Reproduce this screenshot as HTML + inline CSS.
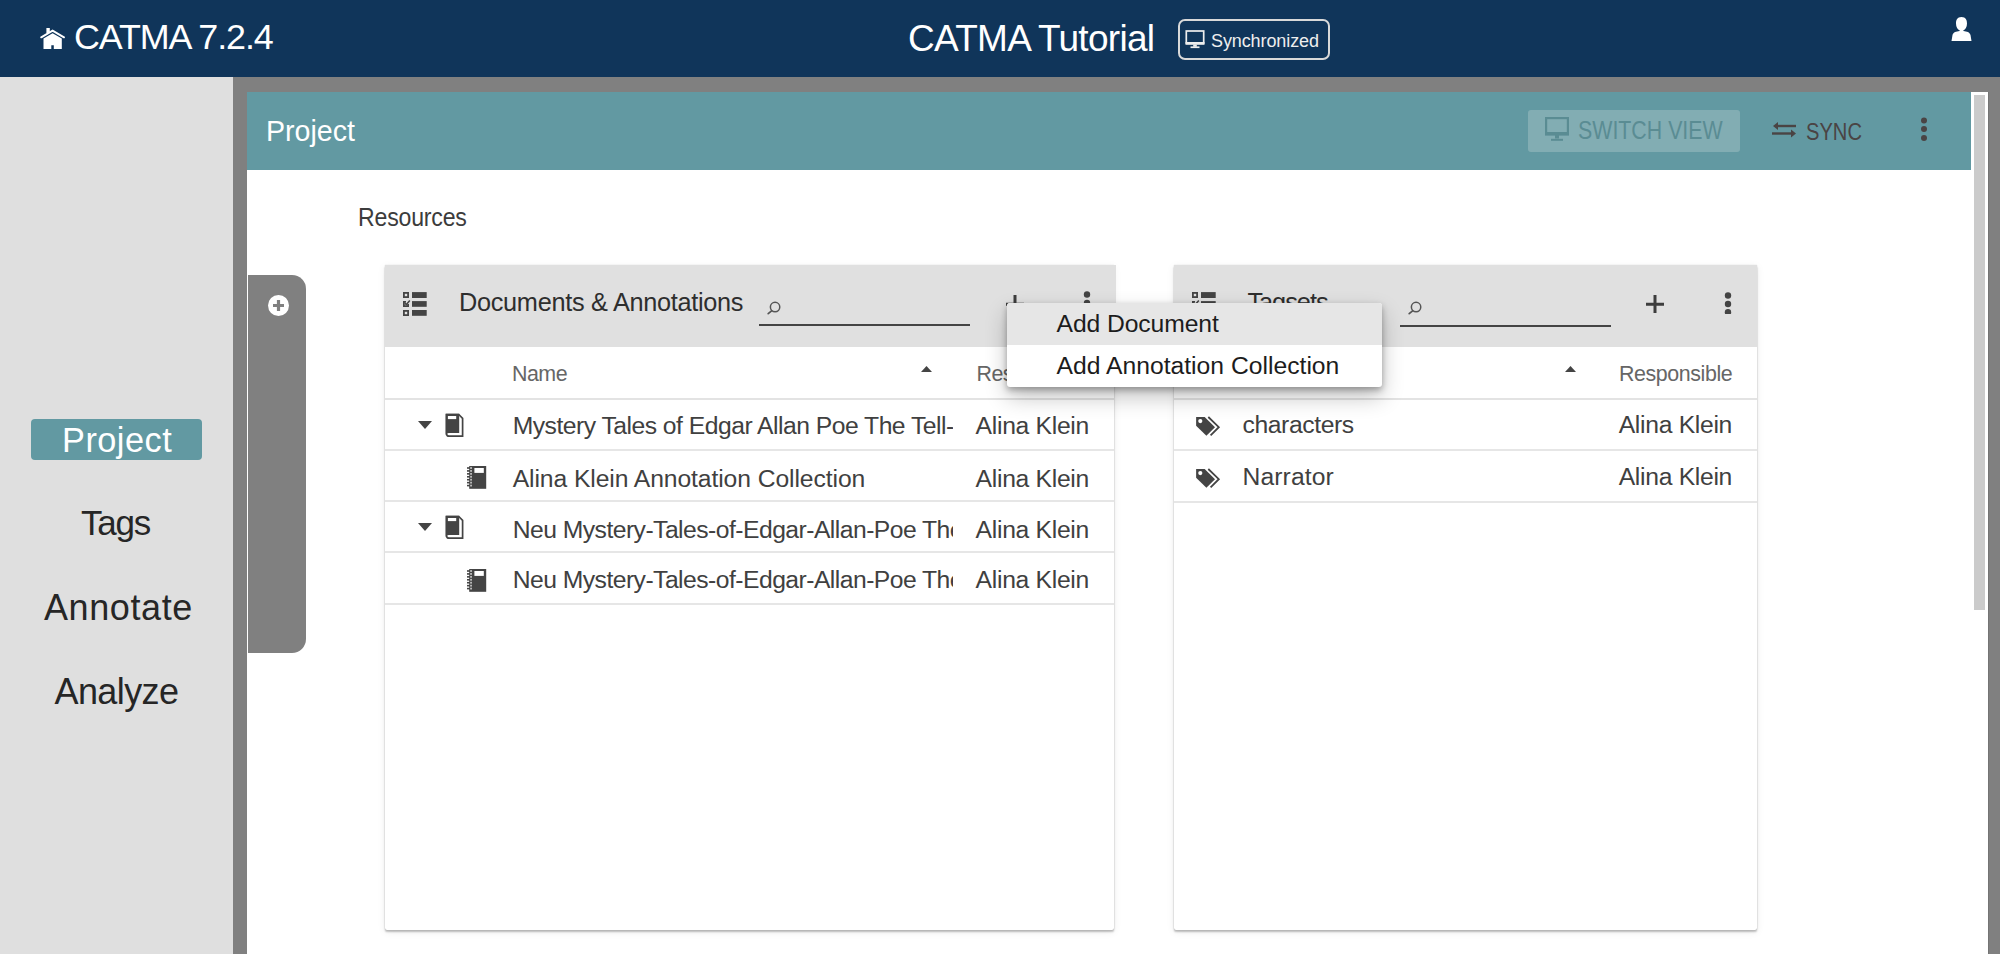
<!DOCTYPE html>
<html><head><meta charset="utf-8"><style>
html,body{margin:0;padding:0;width:2000px;height:954px;overflow:hidden;background:#808080;font-family:"Liberation Sans", sans-serif;}
.r{position:absolute;}
.t{position:absolute;white-space:nowrap;line-height:1;}
</style></head><body>
<div class="r" style="left:0px;top:0px;width:2000px;height:77px;background:#10355a;"></div>
<div class="t" style="left:74.0px;top:20px;font-size:35.90px;color:#fff;letter-spacing:-1.1px;">CATMA 7.2.4</div>
<div class="t" style="left:908.0px;top:20px;font-size:37.00px;color:#fff;letter-spacing:-0.72px;">CATMA Tutorial</div>
<div class="r" style="left:1177.5px;top:19px;width:152.0px;height:41px;background:transparent;border:2px solid #d9d9d9;border-radius:7px;box-sizing:border-box;"></div>
<div class="t" style="left:1211.0px;top:32px;font-size:18.00px;color:#eee;letter-spacing:-0.1px;">Synchronized</div>
<svg class="r" style="left:36px;top:22px" width="34" height="32" viewBox="0 0 34 32">
<path d="M5.2 15.3 L16.6 8.6 L28 15.3" fill="none" stroke="#fff" stroke-width="2" stroke-linecap="round" stroke-linejoin="miter"/>
<rect x="10.4" y="6" width="3.4" height="5" fill="#fff"/>
<path d="M7.5 16.6 L16.6 11.2 L25.8 16.6 V27 H17.8 V23.2 H15.3 V27 H7.5 Z" fill="#fff"/>
</svg>
<svg class="r" style="left:1185px;top:30px" width="20" height="19" viewBox="0 0 20 19">
<rect x="1.3" y="1" width="17.4" height="12" fill="none" stroke="#eee" stroke-width="1.7"/>
<rect x="0.5" y="12" width="19" height="2.8" fill="#eee"/>
<rect x="8.2" y="14.5" width="3.6" height="2.3" fill="#eee"/>
<rect x="5.5" y="16.4" width="9" height="1.7" fill="#eee"/>
</svg>
<svg class="r" style="left:1950px;top:16px" width="23" height="26" viewBox="0 0 23 26">
<path d="M11.5 1 C15.9 1 17 4 17 7.5 C17 11 15.3 13.5 13.4 14.3 L13.4 15 C17 15.5 19.5 16 20.5 19 L21.5 25 H1.5 L2.5 19 C3.5 16 6 15.5 9.6 15 L9.6 14.3 C7.7 13.5 6 11 6 7.5 C6 4 7.1 1 11.5 1 Z" fill="#fff"/>
</svg>
<div class="r" style="left:0px;top:77px;width:233px;height:877px;background:#dfdfdf;"></div>
<div class="r" style="left:233px;top:77px;width:1767px;height:877px;background:#808080;"></div>
<div class="r" style="left:31px;top:419px;width:171px;height:41px;background:#6299a2;border-radius:4px;"></div>
<div class="t" style="left:62.0px;top:423px;font-size:34.30px;color:#fff;letter-spacing:0.5px;">Project</div>
<div class="t" style="left:81.0px;top:505px;font-size:35.00px;color:#262626;letter-spacing:-1.2px;">Tags</div>
<div class="t" style="left:44.0px;top:590px;font-size:36.00px;color:#262626;letter-spacing:0.6px;">Annotate</div>
<div class="t" style="left:54.5px;top:674px;font-size:36.00px;color:#262626;letter-spacing:-0.6px;">Analyze</div>
<div class="r" style="left:247px;top:92px;width:1724px;height:862px;background:#fff;"></div>
<div class="r" style="left:247px;top:92px;width:1724px;height:78px;background:#6299a2;"></div>
<div class="t" style="left:266.0px;top:117px;font-size:28.60px;color:#fff;letter-spacing:0px;">Project</div>
<div class="r" style="left:1528px;top:110px;width:212px;height:42px;background:#82adb3;border-radius:3px;"></div>
<svg class="r" style="left:1545px;top:117px" width="24" height="24" viewBox="0 0 24 24">
<rect x="1.1" y="1.1" width="21.8" height="15" fill="none" stroke="#5a8c93" stroke-width="2.2"/>
<rect x="0" y="15" width="24" height="3.6" fill="#5a8c93"/>
<rect x="10" y="18" width="4" height="3.5" fill="#5a8c93"/>
<rect x="6" y="21.8" width="12" height="2" fill="#5a8c93"/>
</svg>
<div class="t" style="left:1578.0px;top:118px;font-size:25.00px;color:#5a8c93;letter-spacing:0px;transform:scaleX(0.854);transform-origin:0 0;">SWITCH VIEW</div>
<svg class="r" style="left:1772px;top:121px" width="25" height="18" viewBox="0 0 25 18">
<path d="M24 5 H4" stroke="#4a4444" stroke-width="2.4"/>
<path d="M1 5 L6 1 V9 Z" fill="#4a4444"/>
<path d="M0 12.5 H20" stroke="#4a4444" stroke-width="2.4"/>
<path d="M24 12.5 L19 8.5 V16.5 Z" fill="#4a4444"/>
</svg>
<div class="t" style="left:1806.0px;top:120px;font-size:24.70px;color:#4a4444;letter-spacing:0px;transform:scaleX(0.816);transform-origin:0 0;">SYNC</div>
<svg class="r" style="left:1920px;top:116px" width="9" height="26" viewBox="0 0 9 26">
<circle cx="4" cy="4.5" r="3" fill="#4a4444"/><circle cx="4" cy="13" r="3" fill="#4a4444"/><circle cx="4" cy="22" r="3" fill="#4a4444"/>
</svg>
<div class="r" style="left:1971px;top:92px;width:17px;height:862px;background:#fff;"></div>
<div class="r" style="left:1974px;top:95px;width:11px;height:515px;background:#cbcbcb;"></div>
<div class="r" style="left:1988px;top:77px;width:12px;height:877px;background:#808080;"></div>
<div class="r" style="left:1988px;top:92px;width:1px;height:862px;background:#747474;"></div>
<div class="t" style="left:358.0px;top:205px;font-size:25.10px;color:#3c3c3c;letter-spacing:-0.2px;transform:scaleX(0.92);transform-origin:0 0;">Resources</div>
<div class="r" style="left:248px;top:275px;width:58px;height:378px;background:#808080;border-radius:0 14px 14px 0;"></div>
<svg class="r" style="left:267px;top:294px" width="23" height="23" viewBox="0 0 23 23">
<circle cx="11.5" cy="11.5" r="10.5" fill="#fff"/>
<path d="M11.5 6 V17 M6 11.5 H17" stroke="#808080" stroke-width="3.2"/>
</svg>
<div class="r" style="left:385px;top:265px;width:729px;height:665px;background:#fff;box-shadow:0 0 1px rgba(0,0,0,0.25),0 2px 2px rgba(0,0,0,0.24),0 2px 8px rgba(0,0,0,0.07);border-radius:0 0 2px 2px;"></div>
<div class="r" style="left:385px;top:265px;width:731px;height:82px;background:#e0e0e0;"></div>
<div class="r" style="left:1174px;top:265px;width:583px;height:665px;background:#fff;box-shadow:0 0 1px rgba(0,0,0,0.25),0 2px 2px rgba(0,0,0,0.24),0 2px 8px rgba(0,0,0,0.07);border-radius:0 0 2px 2px;"></div>
<div class="r" style="left:1174px;top:265px;width:583px;height:82px;background:#e0e0e0;"></div>
<svg class="r" style="left:403px;top:292px" width="25" height="25" viewBox="0 0 25 25">
<rect x="0.9" y="0.9" width="4.2" height="4.2" fill="none" stroke="#444" stroke-width="1.8"/>
<rect x="9" y="0.1" width="14.7" height="5.9" fill="#444"/>
<path d="M5.1 12 V14.1 H0.9 V9.9 H3" fill="none" stroke="#444" stroke-width="1.8"/>
<path d="M2 11.2 L3.3 12.6 L6.8 8.6" fill="none" stroke="#444" stroke-width="1.5"/>
<rect x="9" y="9.1" width="14.7" height="5.7" fill="#444"/>
<rect x="0.9" y="18.9" width="4.2" height="4.2" fill="none" stroke="#444" stroke-width="1.8"/>
<rect x="9" y="18" width="14.7" height="5.8" fill="#444"/>
</svg>
<div class="t" style="left:459.0px;top:290px;font-size:25.30px;color:#2e2e2e;letter-spacing:-0.3px;">Documents &amp; Annotations</div>
<svg class="r" style="left:767px;top:301px" width="14" height="14" viewBox="0 0 14 14">
<circle cx="8.07" cy="6.05" r="4.7" fill="none" stroke="#555" stroke-width="1.5"/>
<path d="M4.6 9.8 L1.2 12.7" stroke="#555" stroke-width="1.7" stroke-linecap="round"/>
</svg>
<div class="r" style="left:759px;top:324px;width:211px;height:2px;background:#444;"></div>
<svg class="r" style="left:1005.5px;top:295px" width="18" height="18" viewBox="0 0 18 18">
<path d="M9 0 V18 M0 9.3 H18" stroke="#3d3d3d" stroke-width="3"/>
</svg>
<svg class="r" style="left:1083px;top:291px" width="8" height="22" viewBox="0 0 8 22">
<circle cx="4" cy="3.5" r="3.2" fill="#444"/><circle cx="4" cy="12" r="3.2" fill="#444"/><circle cx="4" cy="20.2" r="3.2" fill="#444"/>
</svg>
<div class="t" style="left:512.0px;top:364px;font-size:21.40px;color:#666;letter-spacing:-0.5px;">Name</div>
<svg class="r" style="left:921px;top:366px" width="11" height="6" viewBox="0 0 11 6">
<path d="M0 6 H11 L5.5 0 Z" fill="#444"/></svg>
<div class="t" style="left:976.5px;top:364px;font-size:21.40px;color:#666;letter-spacing:-0.5px;">Res</div>
<div class="r" style="left:385px;top:398px;width:729px;height:2px;background:#e3e3e3;"></div>
<div class="r" style="left:385px;top:449px;width:729px;height:2px;background:#e6e6e6;"></div>
<svg class="r" style="left:418px;top:421px" width="14" height="8" viewBox="0 0 14 8">
<path d="M0 0 H14 L7 8 Z" fill="#444"/></svg>
<svg class="r" style="left:445px;top:413px" width="19" height="25" viewBox="0 0 19 25">
<path d="M1.5 1.5 H13.8 L17.6 5.3 V23.2 H4.2 Q1.5 23.2 1.5 20.5 Z" fill="#fff" stroke="#444" stroke-width="1.7"/>
<path d="M0.7 0.7 H14.2 V20 H4 Q0.7 20 0.7 22.5 Z" fill="#444"/>
<rect x="2.9" y="3" width="8.3" height="3.1" fill="#fff"/>
</svg>
<div class="r" style="left:512px;top:400px;width:441px;height:48px;overflow:hidden"><div class="t" style="left:0.7px;top:14px;font-size:24.70px;color:#404040;letter-spacing:-0.51px;">Mystery Tales of Edgar Allan Poe The Tell-Tale Heart</div>
</div>
<div class="t" style="left:975.6px;top:414px;font-size:24.70px;color:#404040;letter-spacing:-0.3px;">Alina Klein</div>
<div class="r" style="left:385px;top:500px;width:729px;height:2px;background:#e6e6e6;"></div>
<svg class="r" style="left:467px;top:466px" width="20" height="24" viewBox="0 0 20 24">
<rect x="2.2" y="0" width="17" height="22.8" fill="#444"/>
<rect x="7.4" y="2" width="9.4" height="4.9" fill="#fff"/>
<rect x="0" y="1.20" width="3" height="1.6" fill="#444"/><rect x="3.2" y="1.10" width="1.7" height="1.8" fill="#c8c8c8"/><rect x="0" y="4.13" width="3" height="1.6" fill="#444"/><rect x="3.2" y="4.03" width="1.7" height="1.8" fill="#c8c8c8"/><rect x="0" y="7.06" width="3" height="1.6" fill="#444"/><rect x="3.2" y="6.96" width="1.7" height="1.8" fill="#c8c8c8"/><rect x="0" y="9.99" width="3" height="1.6" fill="#444"/><rect x="3.2" y="9.89" width="1.7" height="1.8" fill="#c8c8c8"/><rect x="0" y="12.92" width="3" height="1.6" fill="#444"/><rect x="3.2" y="12.82" width="1.7" height="1.8" fill="#c8c8c8"/><rect x="0" y="15.85" width="3" height="1.6" fill="#444"/><rect x="3.2" y="15.75" width="1.7" height="1.8" fill="#c8c8c8"/><rect x="0" y="18.78" width="3" height="1.6" fill="#444"/><rect x="3.2" y="18.68" width="1.7" height="1.8" fill="#c8c8c8"/>
</svg>
<div class="r" style="left:512px;top:451px;width:441px;height:48px;overflow:hidden"><div class="t" style="left:0.7px;top:16px;font-size:24.70px;color:#404040;letter-spacing:-0.09px;">Alina Klein Annotation Collection</div>
</div>
<div class="t" style="left:975.6px;top:467px;font-size:24.70px;color:#404040;letter-spacing:-0.3px;">Alina Klein</div>
<div class="r" style="left:385px;top:551px;width:729px;height:2px;background:#e6e6e6;"></div>
<svg class="r" style="left:418px;top:523px" width="14" height="8" viewBox="0 0 14 8">
<path d="M0 0 H14 L7 8 Z" fill="#444"/></svg>
<svg class="r" style="left:445px;top:515px" width="19" height="25" viewBox="0 0 19 25">
<path d="M1.5 1.5 H13.8 L17.6 5.3 V23.2 H4.2 Q1.5 23.2 1.5 20.5 Z" fill="#fff" stroke="#444" stroke-width="1.7"/>
<path d="M0.7 0.7 H14.2 V20 H4 Q0.7 20 0.7 22.5 Z" fill="#444"/>
<rect x="2.9" y="3" width="8.3" height="3.1" fill="#fff"/>
</svg>
<div class="r" style="left:512px;top:502px;width:441px;height:48px;overflow:hidden"><div class="t" style="left:0.7px;top:16px;font-size:24.70px;color:#404040;letter-spacing:-0.53px;">Neu Mystery-Tales-of-Edgar-Allan-Poe The Tell-Tale</div>
</div>
<div class="t" style="left:975.6px;top:518px;font-size:24.70px;color:#404040;letter-spacing:-0.3px;">Alina Klein</div>
<div class="r" style="left:385px;top:603px;width:729px;height:2px;background:#e6e6e6;"></div>
<svg class="r" style="left:467px;top:569px" width="20" height="24" viewBox="0 0 20 24">
<rect x="2.2" y="0" width="17" height="22.8" fill="#444"/>
<rect x="7.4" y="2" width="9.4" height="4.9" fill="#fff"/>
<rect x="0" y="1.20" width="3" height="1.6" fill="#444"/><rect x="3.2" y="1.10" width="1.7" height="1.8" fill="#c8c8c8"/><rect x="0" y="4.13" width="3" height="1.6" fill="#444"/><rect x="3.2" y="4.03" width="1.7" height="1.8" fill="#c8c8c8"/><rect x="0" y="7.06" width="3" height="1.6" fill="#444"/><rect x="3.2" y="6.96" width="1.7" height="1.8" fill="#c8c8c8"/><rect x="0" y="9.99" width="3" height="1.6" fill="#444"/><rect x="3.2" y="9.89" width="1.7" height="1.8" fill="#c8c8c8"/><rect x="0" y="12.92" width="3" height="1.6" fill="#444"/><rect x="3.2" y="12.82" width="1.7" height="1.8" fill="#c8c8c8"/><rect x="0" y="15.85" width="3" height="1.6" fill="#444"/><rect x="3.2" y="15.75" width="1.7" height="1.8" fill="#c8c8c8"/><rect x="0" y="18.78" width="3" height="1.6" fill="#444"/><rect x="3.2" y="18.68" width="1.7" height="1.8" fill="#c8c8c8"/>
</svg>
<div class="r" style="left:512px;top:554px;width:441px;height:48px;overflow:hidden"><div class="t" style="left:0.7px;top:14px;font-size:24.70px;color:#404040;letter-spacing:-0.53px;">Neu Mystery-Tales-of-Edgar-Allan-Poe The Tell-Tale</div>
</div>
<div class="t" style="left:975.6px;top:568px;font-size:24.70px;color:#404040;letter-spacing:-0.3px;">Alina Klein</div>
<div class="r" style="left:1174px;top:265px;width:583px;height:40px;overflow:hidden"><svg class="r" style="left:18px;top:27px" width="25" height="25" viewBox="0 0 25 25">
<rect x="0.9" y="0.9" width="4.2" height="4.2" fill="none" stroke="#444" stroke-width="1.8"/>
<rect x="9" y="0.1" width="14.7" height="5.9" fill="#444"/>
<path d="M5.1 12 V14.1 H0.9 V9.9 H3" fill="none" stroke="#444" stroke-width="1.8"/>
<path d="M2 11.2 L3.3 12.6 L6.8 8.6" fill="none" stroke="#444" stroke-width="1.5"/>
<rect x="9" y="9.1" width="14.7" height="5.7" fill="#444"/>
<rect x="0.9" y="18.9" width="4.2" height="4.2" fill="none" stroke="#444" stroke-width="1.8"/>
<rect x="9" y="18" width="14.7" height="5.8" fill="#444"/>
</svg>
<div class="t" style="left:73.4px;top:25px;font-size:25.30px;color:#2e2e2e;letter-spacing:-1.0px;">Tagsets</div>
</div>
<svg class="r" style="left:1408px;top:301px" width="14" height="14" viewBox="0 0 14 14">
<circle cx="8.07" cy="6.05" r="4.7" fill="none" stroke="#555" stroke-width="1.5"/>
<path d="M4.6 9.8 L1.2 12.7" stroke="#555" stroke-width="1.7" stroke-linecap="round"/>
</svg>
<div class="r" style="left:1400px;top:325px;width:211px;height:2px;background:#444;"></div>
<svg class="r" style="left:1646px;top:295px" width="18" height="18" viewBox="0 0 18 18">
<path d="M9 0 V18 M0 9.3 H18" stroke="#3d3d3d" stroke-width="3"/>
</svg>
<svg class="r" style="left:1724px;top:292px" width="8" height="22" viewBox="0 0 8 22">
<circle cx="4" cy="3.5" r="3.2" fill="#444"/><circle cx="4" cy="12" r="3.2" fill="#444"/><circle cx="4" cy="20.2" r="3.2" fill="#444"/>
</svg>
<svg class="r" style="left:1564.5px;top:366px" width="11" height="6" viewBox="0 0 11 6">
<path d="M0 6 H11 L5.5 0 Z" fill="#444"/></svg>
<div class="t" style="left:1619.0px;top:364px;font-size:21.40px;color:#666;letter-spacing:-0.4px;">Responsible</div>
<div class="r" style="left:1174px;top:398px;width:583px;height:2px;background:#e3e3e3;"></div>
<div class="r" style="left:1174px;top:449px;width:583px;height:2px;background:#e6e6e6;"></div>
<svg class="r" style="left:1196px;top:416px" width="25" height="22" viewBox="0 0 25 22">
<path d="M0.1 1 H8.7 L19 11.2 L10.4 19.8 L0.1 9.8 Z" fill="#444"/>
<circle cx="4.3" cy="5.1" r="2.1" fill="#fff"/>
<path d="M12.3 1 L22.8 11.2 L14.6 19.4" fill="none" stroke="#444" stroke-width="1.8"/>
</svg>
<div class="t" style="left:1242.5px;top:413px;font-size:24.70px;color:#404040;letter-spacing:-0.4px;">characters</div>
<div class="t" style="left:1618.7px;top:413px;font-size:24.70px;color:#404040;letter-spacing:-0.3px;">Alina Klein</div>
<div class="r" style="left:1174px;top:501px;width:583px;height:2px;background:#e6e6e6;"></div>
<svg class="r" style="left:1196px;top:468px" width="25" height="22" viewBox="0 0 25 22">
<path d="M0.1 1 H8.7 L19 11.2 L10.4 19.8 L0.1 9.8 Z" fill="#444"/>
<circle cx="4.3" cy="5.1" r="2.1" fill="#fff"/>
<path d="M12.3 1 L22.8 11.2 L14.6 19.4" fill="none" stroke="#444" stroke-width="1.8"/>
</svg>
<div class="t" style="left:1242.5px;top:465px;font-size:24.70px;color:#404040;letter-spacing:0.1px;">Narrator</div>
<div class="t" style="left:1618.7px;top:465px;font-size:24.70px;color:#404040;letter-spacing:-0.3px;">Alina Klein</div>
<div class="r" style="left:1007px;top:303px;width:375px;height:84px;background:#fff;border-radius:3px;box-shadow:0 10px 22px rgba(0,0,0,0.24),0 3px 6px rgba(0,0,0,0.30);overflow:hidden;"></div>
<div class="r" style="left:1007px;top:303px;width:375px;height:42px;background:#e6e6e6;border-radius:3px 3px 0 0;"></div>
<div class="t" style="left:1056.6px;top:312px;font-size:24.70px;color:#1c1c1c;letter-spacing:-0.1px;">Add Document</div>
<div class="t" style="left:1056.6px;top:354px;font-size:24.70px;color:#1c1c1c;letter-spacing:0px;">Add Annotation Collection</div>

</body></html>
